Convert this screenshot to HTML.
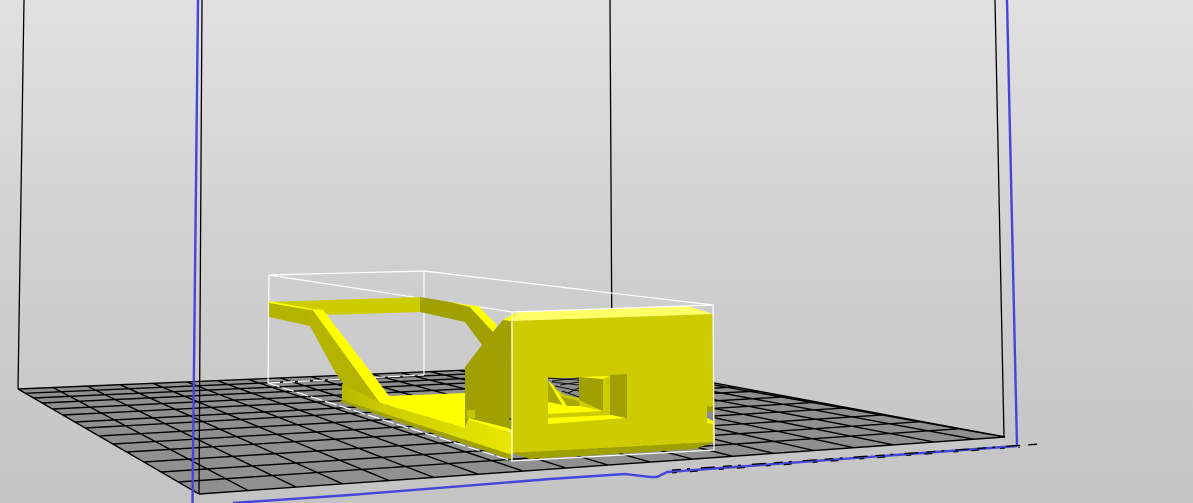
<!DOCTYPE html>
<html><head><meta charset="utf-8"><style>
html,body{margin:0;padding:0;width:1193px;height:503px;overflow:hidden;background:#c8c8c8}
svg{display:block}
</style></head><body>
<svg width="1193" height="503" viewBox="0 0 1193 503" xmlns="http://www.w3.org/2000/svg">
<defs><linearGradient id="bg" x1="0" y1="0" x2="0" y2="1">
<stop offset="0" stop-color="#e1e1e1"/><stop offset=".5" stop-color="#d0d0d0"/><stop offset="1" stop-color="#c4c4c4"/></linearGradient>
<linearGradient id="band" gradientUnits="userSpaceOnUse" x1="342" y1="0" x2="512" y2="0">
<stop offset="0" stop-color="#b8b800"/><stop offset=".3" stop-color="#cfcf00"/><stop offset="1" stop-color="#e8e800"/></linearGradient></defs>
<rect width="1193" height="503" fill="url(#bg)"/>
<polygon points="18,389 612,364 1005,437 199,494" fill="#909090"/>
<g stroke="#000" stroke-width="1.4" fill="none">
<path d="M25,393.3L628,367M33.5,398L646,370.3M42,403L664,373.7M52.5,409L687,378M63,415L709,382M75,422L735,387M85,428L758,391M99,436L788,396.7M113,444L818,402.2M127,452L848,407.8M144,462L885,414.8M161,472L922,421.6M178,482L960,428.7"/>
<path d="M53,387.5L248,490.5M87,386L296,487M120,384.7L343,484M153,383.3L389,480.5M187,382L434,477.5M217,380.6L479,474.5M248,379.3L523,471M280,378L566,468M311,376.7L608,465M341,375.4L650,462M371,374L692,459M401,372.8L733,456.3M430,371.6L774,453.4M459,370.4L814,450.5M488,369.2L854,447.7M516,368L894,445M544,366.9L934,442M572,365.7L974,439.2M600,364.5L1005,437"/>
<path stroke-width="1.4" d="M18,389L612,364M612,364L1005,437M1005,437L199,494M199,494L18,389"/>
<path stroke-width="1.3" d="M24,0L18,389M202,0L199,494M610,0L612,364M995,0L1004,437"/>
</g>
<g stroke="#fff" stroke-width="1.2" fill="none">
<path d="M269,275L424,271L713,305M269,275L512,312M269,275L268,383M424,271L424,375"/>
<path stroke-dasharray="12 3" d="M268,383L424,375M268,383L512,461"/>
</g>
<!-- rear strips -->
<polygon points="269,302 420,297 420,312 330,315 312,309" fill="#cccc00"/>
<polygon points="269,302 312,309 310,326 269,317" fill="#b4b400"/>
<polygon points="269,301 313,309 311,310 269,303" fill="#ffff00"/>
<!-- body -->
<polygon points="420,297 468,305 493,332 503,320 512,321 512,436 468,419 465,428 465,367 482,345 465,322 420,312" fill="#a0a000"/>
<polygon points="450,302 468,305 478,306 497,325 493,332 470,307" fill="#ffff00"/>
<polygon points="503,320 517,312 511,321" fill="#ffff00"/>
<!-- diagonal leg -->
<polygon points="312,309 380,402 343,398 343,383 335,372 310,326" fill="#b4b400"/>
<polygon points="312,309 323,310 390,397 380,403" fill="#ffff00"/>
<polygon points="388,396 465,393 465,428 380,403" fill="#ffff00"/>
<!-- lower band -->
<polygon points="342,384 380,403 465,428 468,419 512,434 512,455 342,400" fill="url(#band)"/>
<polygon points="342,400 512,455 512,460 340,402" fill="#a0a000"/>
<!-- bracket details -->
<rect x="467" y="410" width="8" height="8" fill="#c4c400"/>
<polygon points="468,418 508,428 518,433 510,433 470,420" fill="#ffff00"/>
<polygon points="508,417 519,416 519,434 508,429" fill="#a0a000"/>
<rect x="509" y="418" width="7" height="2" fill="#5a5a00"/>
<polygon points="508,428 518,433 512,435 509,432" fill="#ffff66"/>
<!-- front face -->
<polygon points="511,321 713,314 715,442 512,453" fill="#cccc00"/>
<polygon points="511,321 518,312 688,306 713,314" fill="#ffff66"/>
<polygon points="512,453 715,442 695,449 530,459" fill="#a0a000"/>
<!-- window -->
<polygon points="548,378 579,378 579,398 565,395 548,384" fill="#8e8e8e"/>
<path d="M548,378L579,380M552,382L579,385M555,386L579,391M562,391L579,397M552,381L579,378M560,385L579,382M568,393L579,388" stroke="#111" stroke-width="1.1" fill="none"/>
<polygon points="548,380 554,388 560,396 579,401 579,406 565,406 548,402" fill="#a8a800"/>
<polygon points="548,381 553,385 567,406 563,406" fill="#ffff00"/>
<polygon points="579,377 603,379 603,411 579,400" fill="#a0a000"/>
<polygon points="580,377 610,376 603,379" fill="#ffff00"/>
<polygon points="603,379 610,376 610,416 603,411" fill="#cccc00"/>
<polygon points="610,375 627,374 627,418 610,415" fill="#a0a000"/>
<polygon points="548,402 567,406 580,406 603,411 548,414" fill="#ffff00"/>
<polygon points="548,418 612,415 625,418 548,424" fill="#ffff00"/>
<!-- right notch -->
<polygon points="707,406 713,407 713,423 707,418" fill="#8e8e8e"/>
<polygon points="707,406 713,407 713,412 707,411" fill="#a0a000"/>
<polygon points="707,418 713,421 713,424 707,423" fill="#ffff00"/>
<g stroke="#fff" stroke-width="1.2" fill="none">
<path d="M512,312L713,305L714,450L512,461L512,312"/>
</g>
<g stroke="#4545dc" stroke-width="2.4" fill="none">
<path d="M198,0L192.5,503M1007,0L1017,446"/>
<path d="M233,503L350,495L550,479L625,474L650,477L657,477L667,472L1017,446"/>
</g>
<path d="M672,471L1040,445" stroke="#000" stroke-width="1.3" stroke-dasharray="9 6 3 11 14 8" fill="none" transform="translate(0,-1)"/>
<path d="M672,473L1020,447" stroke="#000" stroke-width="1.1" stroke-dasharray="5 13 8 21" fill="none"/>
</svg>
</body></html>
